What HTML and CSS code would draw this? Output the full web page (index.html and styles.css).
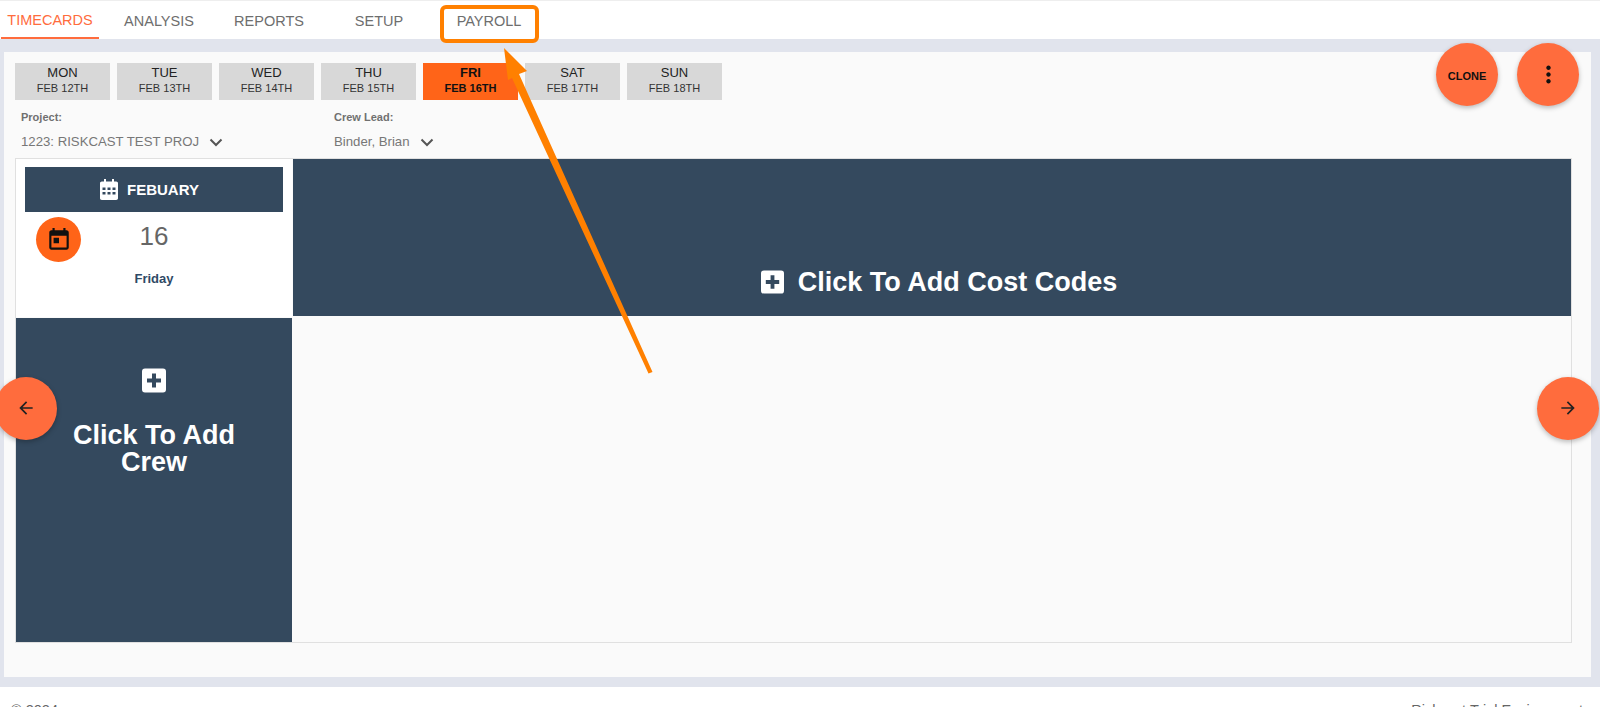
FILE: index.html
```html
<!DOCTYPE html>
<html lang="en">
<head>
<meta charset="utf-8">
<title>Timecards</title>
<link rel="stylesheet" href="styles.css">
</head>
<body>
<nav class="nav">
  <a class="tab tab-active">TIMECARDS</a>
  <a class="tab">ANALYSIS</a>
  <a class="tab">REPORTS</a>
  <a class="tab">SETUP</a>
  <a class="tab">PAYROLL</a>
</nav>
<main class="main">
  <section class="card">
    <div class="days">
      <button class="day"><b class="day-name">MON</b><span class="day-date">FEB 12TH</span></button>
      <button class="day"><b class="day-name">TUE</b><span class="day-date">FEB 13TH</span></button>
      <button class="day"><b class="day-name">WED</b><span class="day-date">FEB 14TH</span></button>
      <button class="day"><b class="day-name">THU</b><span class="day-date">FEB 15TH</span></button>
      <button class="day day-active"><b class="day-name">FRI</b><span class="day-date">FEB 16TH</span></button>
      <button class="day"><b class="day-name">SAT</b><span class="day-date">FEB 17TH</span></button>
      <button class="day"><b class="day-name">SUN</b><span class="day-date">FEB 18TH</span></button>
    </div>
    <div class="filters">
      <div class="filter filter-project">
        <label class="filter-label">Project:</label>
        <div class="filter-value">1223: RISKCAST TEST PROJ
          <svg class="chevron" viewBox="0 0 14 9"><path d="M1.5 1.5 7 7l5.500-5.500" /></svg>
        </div>
      </div>
      <div class="filter">
        <label class="filter-label">Crew Lead:</label>
        <div class="filter-value">Binder, Brian
          <svg class="chevron" viewBox="0 0 14 9"><path d="M1.5 1.5 7 7l5.500-5.500" /></svg>
        </div>
      </div>
    </div>
    <div class="board">
      <div class="date-cell">
        <div class="month">
          <svg class="month-icon" viewBox="0 0 18 21"><path fill-rule="evenodd" d="M4 0h2v2.500H12V0h2v2.500h2.200C17.200 2.500 18 3.300 18 4.300v15C18 20.300 17.200 21 16.200 21H1.800C.8 21 0 20.300 0 19.300v-15C0 3.300.8 2.500 1.800 2.500H4V0zM2.500 8.500v2.500h3V8.500h-3zm5 0v2.500h3V8.500h-3zm5 0v2.500h3V8.500h-3zm-10 4.500v2.500h3V13h-3zm5 0v2.500h3V13h-3zm5 0v2.500h3V13h-3z"/></svg>
          <span>FEBUARY</span>
        </div>
        <div class="date-row">
          <span class="date-badge"><svg class="date-icon" viewBox="0 0 24 24"><path d="M19 3h-1V1h-2v2H8V1H6v2H5c-1.110 0-1.990.9-1.990 2L3 19c0 1.100.89 2 2 2h14c1.100 0 2-.9 2-2V5c0-1.100-.9-2-2-2zm0 16H5V8h14v11zM7 10h5v5H7z"/></svg></span>
          <span class="date-number">16</span>
        </div>
        <div class="date-day">Friday</div>
      </div>
      <div class="cost-cell">
        <svg class="plus plus-cost" viewBox="0 0 24 24"><path fill-rule="evenodd" d="M3 0h18a3 3 0 0 1 3 3v18a3 3 0 0 1-3 3H3a3 3 0 0 1-3-3V3a3 3 0 0 1 3-3zm7 5v5H5v4h5v5h4v-5h5v-4h-5V5h-4z"/></svg>
        <span class="add-text">Click To Add Cost Codes</span>
      </div>
      <div class="crew-cell">
        <svg class="plus plus-crew" viewBox="0 0 24 24"><path fill-rule="evenodd" d="M3 0h18a3 3 0 0 1 3 3v18a3 3 0 0 1-3 3H3a3 3 0 0 1-3-3V3a3 3 0 0 1 3-3zm7 5v5H5v4h5v5h4v-5h5v-4h-5V5h-4z"/></svg>
        <span class="add-text add-crew">Click To Add<br>Crew</span>
      </div>
      <div class="empty-cell"></div>
    </div>
  </section>
</main>
<footer class="footer">
  <span>© 2024</span>
  <span>Riskcast Trial Environment</span>
</footer>

<button class="fab fab-clone">CLONE</button>
<button class="fab fab-more"><svg class="more-icon" viewBox="0 0 24 24"><path d="M12 8c1.100 0 2-.9 2-2s-.9-2-2-2-2 .9-2 2 .9 2 2 2zm0 2c-1.100 0-2 .9-2 2s.9 2 2 2 2-.9 2-2-.9-2-2-2zm0 6c-1.100 0-2 .9-2 2s.9 2 2 2 2-.9 2-2-.9-2-2-2z"/></svg></button>
<button class="fab fab-prev"><svg class="arrow-icon" viewBox="0 0 24 24"><path d="M20 11H7.830l5.590-5.590L12 4l-8 8 8 8 1.410-1.410L7.830 13H20v-2z"/></svg></button>
<button class="fab fab-next"><svg class="arrow-icon" viewBox="0 0 24 24"><path d="M4 11h12.170l-5.590-5.590L12 4l8 8-8 8-1.410-1.410L16.170 13H4v-2z"/></svg></button>

<div class="callout-box"></div>
<svg class="callout-arrow" viewBox="0 0 1600 707"><path d="M504 48 527 71 519 74 652.500 372 648.500 373.500 512 78 508 80Z"/></svg>
</body>
</html>
```

FILE: styles.css
```css
* { box-sizing: border-box; }
html, body { margin: 0; height: 707px; overflow: hidden; }
body { font-family: "Liberation Sans", Arial, sans-serif; color: #666; background: #fff; position: relative; }

.nav { height: 39px; display: flex; align-items: stretch; padding-left: 1px; background: #fff; border-top: 1px solid #eee; }
.tab { width: 110px; display: flex; align-items: center; justify-content: center; font-size: 14.5px; color: #6e6e6e; padding-top: 2px; }
.tab-active { width: 98px; margin-right: 5px; color: #ff6c3d; border-bottom: 2px solid #ff6c3d; }

.main { height: 648px; background: #e1e4ed; padding: 13px 9px 10px 4px; }
.card { height: 625px; background: #fafafa; padding: 11px 19px 0 11px; }

.days { display: flex; gap: 7px; }
.day { width: 95px; height: 37px; border: 0; padding: 2px 0 0; background: #d8d8d8; color: #222; display: flex; flex-direction: column; align-items: center; font-family: inherit; }
.day-name { font-size: 13px; font-weight: 400; line-height: 15px; }
.day-date { font-size: 11px; line-height: 16px; color: #333; }
.day-active { background: #ff6418; color: #111; }
.day-active .day-name, .day-active .day-date { font-weight: 700; color: #111; }

.filters { display: flex; height: 58px; padding-left: 6px; }
.filter { padding-top: 11px; }
.filter-project { width: 313px; }
.filter-label { display: block; font-size: 11px; font-weight: 700; line-height: 13px; color: #707070; }
.filter-value { display: flex; align-items: center; gap: 10px; margin-top: 10px; font-size: 13.2px; line-height: 16px; color: #777; white-space: nowrap; }
.chevron { width: 14px; height: 9px; fill: none; stroke: #555; stroke-width: 2; }

.board { height: 485px; display: grid; grid-template-columns: 276px 1fr; grid-template-rows: 158px 1fr; background: #fafafa; border: 1px solid #e0e0e0; }
.date-cell { background: #fff; padding: 8px 9px 0 9px; display: flex; flex-direction: column; }
.month { height: 45px; background: #34495e; display: flex; align-items: center; justify-content: center; gap: 9px; padding-right: 9px; color: #fff; font-size: 15px; font-weight: 700; }
.month-icon { width: 18px; height: 21px; fill: #fff; }
.date-row { display: grid; grid-template-columns: 1fr auto 1fr; align-items: center; height: 45px; margin-top: 5px; padding: 0 0 0 11px; }
.date-badge { width: 45px; height: 45px; border-radius: 50%; background: #ff6418; display: flex; align-items: center; justify-content: center; }
.date-icon { width: 26px; height: 26px; fill: #111; }
.date-number { font-size: 26px; color: #666; margin: -7px 0 0 -11px; }
.date-day { text-align: center; font-size: 13px; font-weight: 700; color: #2f4a66; margin-top: 9px; }

.cost-cell { background: #34495e; margin-left: 1px; margin-bottom: 1px; display: flex; align-items: flex-end; justify-content: center; gap: 14px; padding: 0 0 19px 14px; }
.plus { fill: #fff; flex: none; }
.plus-cost { width: 23px; height: 24px; margin-bottom: 3px; }
.plus-crew { width: 24px; height: 25px; margin: 1px 0 29px; }
.add-text { color: #fff; font-size: 27px; font-weight: 700; line-height: 30px; white-space: nowrap; }
.add-crew { line-height: 27px; text-align: center; }
.crew-cell { background: #34495e; margin-top: 1px; display: flex; flex-direction: column; align-items: center; padding-top: 49px; }
.empty-cell { background: #fafafa; }

.footer { height: 20px; background: #fff; display: flex; justify-content: space-between; padding: 15px 17px 0 11px; font-size: 14.5px; line-height: 16px; color: #666; }

.fab { position: absolute; width: 62px; height: 63px; border: 0; border-radius: 50%; background: #ff6c3d; box-shadow: 0 2px 5px rgba(0,0,0,.26); display: flex; align-items: center; justify-content: center; padding: 0; color: #111; font-family: inherit; }
.fab-clone { left: 1436px; top: 43px; font-size: 11px; font-weight: 700; padding-top: 2px; }
.fab-more { left: 1517px; top: 43px; }
.fab-prev { left: -5px; top: 377px; padding: 0 1px 2px 0; }
.fab-next { left: 1537px; top: 377px; padding-bottom: 2px; }
.more-icon { width: 27px; height: 27px; fill: #111; }
.arrow-icon { width: 20px; height: 20px; fill: #222; }

.callout-box { position: absolute; left: 440px; top: 5px; width: 99px; height: 38px; border: 4px solid #ff8000; border-radius: 6px; }
.callout-arrow { position: absolute; left: 0; top: 0; width: 1600px; height: 707px; fill: #ff8000; pointer-events: none; }
```
